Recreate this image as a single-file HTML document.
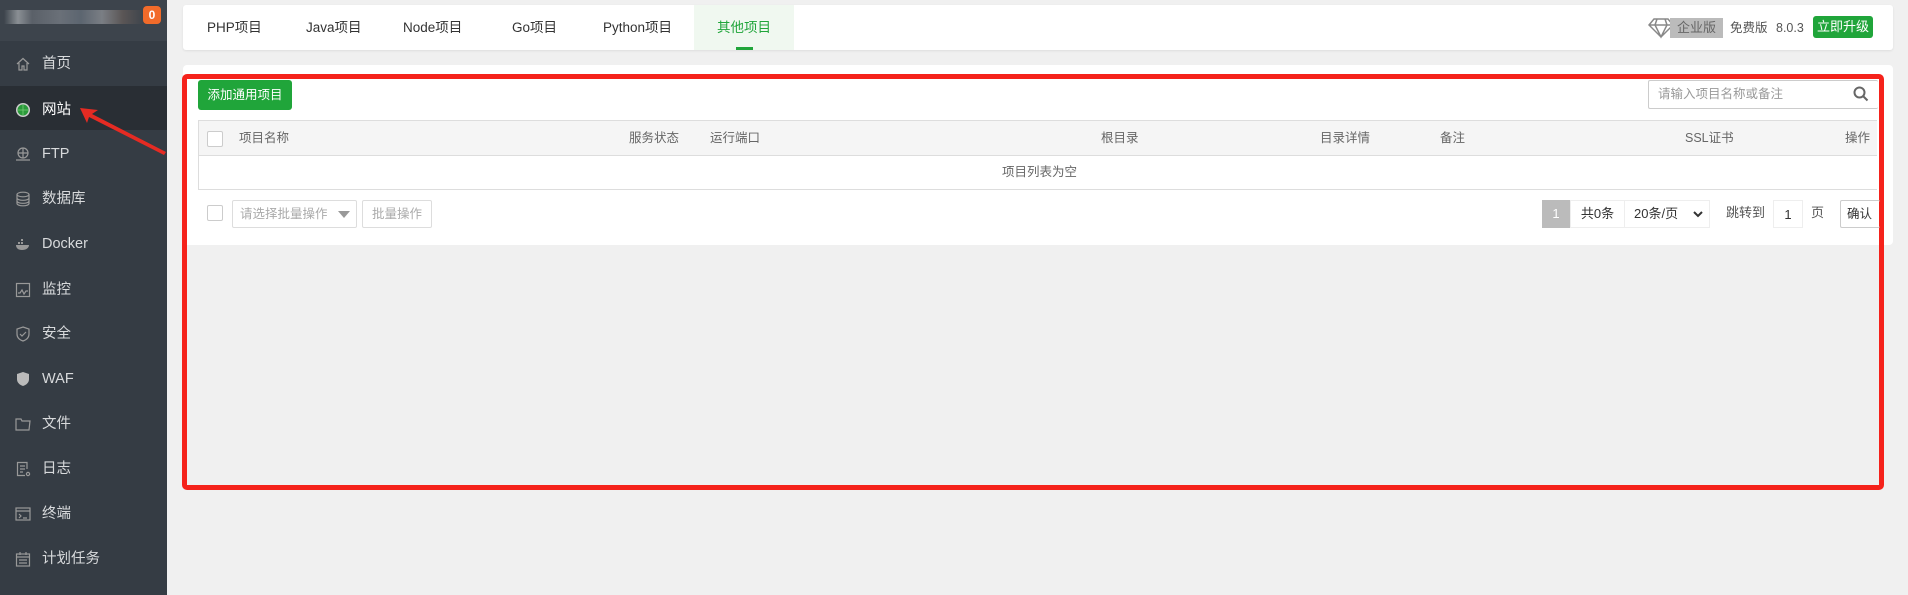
<!DOCTYPE html>
<html><head><meta charset="utf-8"><style>
*{box-sizing:border-box;margin:0;padding:0}
body{width:1908px;height:595px;background:#f0f0f0;font-family:"Liberation Sans","Noto Sans CJK SC",sans-serif;position:relative;overflow:hidden;color:#555}
.a{position:absolute}
#side{left:0;top:0;width:167px;height:595px;background:#353c44}
#side .hd{position:absolute;left:0;top:0;width:167px;height:41px;background:#3d444c}
.mi{position:absolute;left:0;width:167px;height:44px;color:#d8dadc;font-size:14.5px;line-height:48px;padding-left:42px}
.mi.act{background:#292e34;color:#fff}
.mi svg{position:absolute;left:15px;top:16px}
.tab{position:absolute;top:5px;height:45px;line-height:45px;font-size:13.5px;color:#333}
.hdr{position:absolute;top:120px;font-size:12.5px;color:#666;line-height:36px}
</style></head><body>
<div id="side" class="a">
 <div class="hd"></div>
 <div class="a" style="left:4px;top:10px;width:140px;height:14px;background:linear-gradient(90deg,#3d444c,#8a8f94 10%,#5a6068 20%,#6a7078 40%,#5c6570 55%,#7a7e84 70%,#5a5555 85%,#3d444c)"></div>
 <div class="a" style="left:143px;top:6px;width:18px;height:18px;background:#f26b2a;border-radius:4px;color:#fff;font-size:12px;text-align:center;line-height:18px;font-weight:bold">0</div>
 <div class="mi" style="top:40px"><svg width="16" height="16" viewBox="0 0 16 16" fill="none" stroke="#999" stroke-width="1.2"><path d="M2 8L8 2.5 14 8M4 7v7h3v-4h2v4h3V7"/></svg>首页</div>
 <div class="mi act" style="top:86px"><svg width="16" height="16" viewBox="0 0 16 16"><circle cx="8" cy="8" r="7" fill="#ccc"/><circle cx="8" cy="8" r="5.5" fill="#2a9a3a"/><path d="M3 8h10M8 3v10" stroke="#7c7" stroke-width=".8"/></svg>网站</div>
 <div class="mi" style="top:130px"><svg width="16" height="16" viewBox="0 0 16 16" fill="none" stroke="#999" stroke-width="1.2"><circle cx="8" cy="7" r="5"/><path d="M3 7h10M8 2v10M1 14h14"/></svg>FTP</div>
 <div class="mi" style="top:175px"><svg width="16" height="16" viewBox="0 0 16 16" fill="none" stroke="#999" stroke-width="1.2"><ellipse cx="8" cy="3.5" rx="6" ry="2.3"/><path d="M2 3.5v9c0 1.3 2.7 2.3 6 2.3s6-1 6-2.3v-9M2 7c0 1.3 2.7 2.3 6 2.3S14 8.3 14 7M2 10c0 1.3 2.7 2.3 6 2.3s6-1 6-2.3"/></svg>数据库</div>
 <div class="mi" style="top:220px"><svg width="16" height="16" viewBox="0 0 16 16" fill="#999"><path d="M1 9h13c0 3-3 5-7 5S1 12 1 9z"/><rect x="3" y="6" width="2" height="2"/><rect x="6" y="6" width="2" height="2"/><rect x="6" y="3" width="2" height="2"/></svg>Docker</div>
 <div class="mi" style="top:266px"><svg width="16" height="16" viewBox="0 0 16 16" fill="none" stroke="#999" stroke-width="1.2"><rect x="1.5" y="1.5" width="13" height="13"/><path d="M3 11h2l2-3 2 4 2-3h2"/></svg>监控</div>
 <div class="mi" style="top:310px"><svg width="16" height="16" viewBox="0 0 16 16" fill="none" stroke="#999" stroke-width="1.2"><path d="M8 1l6 2v5c0 4-3 6-6 7-3-1-6-3-6-7V3z"/><path d="M5 8l2 2 4-4"/></svg>安全</div>
 <div class="mi" style="top:355px"><svg width="16" height="16" viewBox="0 0 16 16" fill="#bbb"><path d="M8 1l6 2v5c0 4-3 6-6 7-3-1-6-3-6-7V3z"/></svg>WAF</div>
 <div class="mi" style="top:400px"><svg width="16" height="16" viewBox="0 0 16 16" fill="none" stroke="#999" stroke-width="1.2"><path d="M1 3h5l1 2h8l-1 9H1z"/></svg>文件</div>
 <div class="mi" style="top:445px"><svg width="16" height="16" viewBox="0 0 16 16" fill="none" stroke="#999" stroke-width="1.2"><path d="M12 8V1.5H2.5v13H10M5 5h5M5 8h5M5 11h3"/><circle cx="13" cy="13" r="1.6"/></svg>日志</div>
 <div class="mi" style="top:490px"><svg width="16" height="16" viewBox="0 0 16 16" fill="none" stroke="#999" stroke-width="1.2"><rect x="1" y="2" width="14" height="12"/><path d="M1 5h14M4 8l2 2-2 2M8 12h4"/></svg>终端</div>
 <div class="mi" style="top:535px"><svg width="16" height="16" viewBox="0 0 16 16" fill="none" stroke="#999" stroke-width="1.2"><rect x="1.5" y="3" width="13" height="12"/><path d="M1.5 6h13M5 1v3M11 1v3M4 9h8M4 12h8"/></svg>计划任务</div>
 <svg class="a" style="left:0;top:0" width="167" height="160"><polygon points="80,108 98,110 92,114 166,152 164,155 89,117 87,123" fill="#e52b23"/></svg>
</div>

<div class="a" style="left:183px;top:5px;width:1710px;height:45px;background:#fff;border-radius:3px;box-shadow:0 1px 2px rgba(0,0,0,.08)"></div>
<div class="a" style="left:694px;top:5px;width:100px;height:45px;background:#f0f8f0"></div>
<div class="tab" style="left:207px">PHP项目</div>
<div class="tab" style="left:306px">Java项目</div>
<div class="tab" style="left:403px">Node项目</div>
<div class="tab" style="left:512px">Go项目</div>
<div class="tab" style="left:603px">Python项目</div>
<div class="tab" style="left:717px;color:#20a53a">其他项目</div>
<div class="a" style="left:736px;top:47px;width:17px;height:3px;background:#20a53a"></div>
<svg class="a" style="left:1648px;top:17px" width="26" height="22" viewBox="0 0 26 22" fill="none" stroke="#888" stroke-width="1.5"><path d="M6 2h14l5 6-12 12L1 8zM1 8h24M9 2l-2 6 6 12 6-12-2-6"/></svg>
<div class="a" style="left:1670px;top:18px;width:53px;height:20px;background:#bbb;color:#666;font-size:13px;line-height:20px;text-align:center">企业版</div>
<div class="a" style="left:1730px;top:18px;font-size:12.5px;line-height:20px;color:#555">免费版</div>
<div class="a" style="left:1776px;top:18px;font-size:12.5px;line-height:20px;color:#555">8.0.3</div>
<div class="a" style="left:1813px;top:16px;width:60px;height:22px;background:#20a53a;border-radius:3px;color:#fff;font-size:13px;line-height:22px;text-align:center">立即升级</div>

<div class="a" style="left:183px;top:65px;width:1710px;height:180px;background:#fff;border-radius:4px"></div>
<div class="a" style="left:182px;top:74px;width:1702px;height:416px;border:5px solid #f5221b;border-radius:5px"></div>
<div class="a" style="left:198px;top:80px;width:94px;height:30px;background:#20a53a;border-radius:3px;color:#fff;font-size:12.5px;line-height:30px;text-align:center">添加通用项目</div>
<div class="a" style="left:1648px;top:80px;width:230px;height:29px;border:1px solid #ccc;border-right:none;border-radius:2px;font-size:12.5px;line-height:27px;color:#999;padding-left:9px">请输入项目名称或备注</div>
<svg class="a" style="left:1853px;top:86px" width="16" height="16" viewBox="0 0 16 16" fill="none" stroke="#666" stroke-width="2"><circle cx="6.5" cy="6.5" r="5"/><path d="M10 10l4.5 4.5"/></svg>

<div class="a" style="left:198px;top:120px;width:1679px;height:36px;background:#f5f5f5;border-top:1px solid #ddd;border-bottom:1px solid #ddd"></div>
<div class="a" style="left:198px;top:155px;width:1679px;height:35px;border-bottom:1px solid #ddd;border-left:1px solid #ddd"></div>
<div class="a" style="left:198px;top:120px;width:1px;height:36px;background:#ddd"></div>
<div class="a" style="left:207px;top:131px;width:16px;height:16px;border:1px solid #ccc;background:#fff;border-radius:2px"></div>
<div class="hdr" style="left:239px">项目名称</div>
<div class="hdr" style="left:629px">服务状态</div>
<div class="hdr" style="left:710px">运行端口</div>
<div class="hdr" style="left:1101px">根目录</div>
<div class="hdr" style="left:1320px">目录详情</div>
<div class="hdr" style="left:1440px">备注</div>
<div class="hdr" style="left:1685px">SSL证书</div>
<div class="hdr" style="left:1845px">操作</div>
<div class="a" style="left:1002px;top:155px;font-size:12.5px;line-height:35px;color:#666">项目列表为空</div>

<div class="a" style="left:207px;top:205px;width:16px;height:16px;border:1px solid #ccc;background:#fff;border-radius:2px"></div>
<div class="a" style="left:232px;top:200px;width:125px;height:28px;border:1px solid #ddd;border-radius:2px;font-size:12.5px;line-height:26px;color:#aaa;padding-left:7px">请选择批量操作</div>
<div class="a" style="left:338px;top:211px;border-left:6px solid transparent;border-right:6px solid transparent;border-top:7px solid #999"></div>
<div class="a" style="left:362px;top:200px;width:70px;height:28px;border:1px solid #ddd;border-radius:2px;font-size:12.5px;line-height:26px;color:#aaa;text-align:center">批量操作</div>

<div class="a" style="left:1542px;top:200px;width:28px;height:28px;background:#bbb;color:#fff;font-size:13px;line-height:28px;text-align:center">1</div>
<div class="a" style="left:1570px;top:200px;width:55px;height:28px;border:1px solid #eee;font-size:13px;line-height:26px;text-align:center;color:#333">共0条</div>
<div class="a" style="left:1625px;top:200px;width:85px;height:28px;border:1px solid #eee;border-left:none;font-size:13px;line-height:26px;color:#333;padding-left:9px">20条/页</div>
<svg class="a" style="left:1693px;top:210px" width="10" height="8" viewBox="0 0 10 8" fill="none" stroke="#333" stroke-width="2"><path d="M1 2l4 4 4-4"/></svg>
<div class="a" style="left:1726px;top:200px;font-size:13px;line-height:26px;color:#555">跳转到</div>
<div class="a" style="left:1773px;top:200px;width:30px;height:28px;border:1px solid #eee;font-size:13px;line-height:28px;text-align:center;color:#333">1</div>
<div class="a" style="left:1811px;top:200px;font-size:13px;line-height:26px;color:#555">页</div>
<div class="a" style="left:1840px;top:200px;width:40px;height:28px;border:1px solid #ccc;border-right:none;border-radius:2px;font-size:12.5px;line-height:26px;color:#333;padding-left:6px">确认</div>
</body></html>
